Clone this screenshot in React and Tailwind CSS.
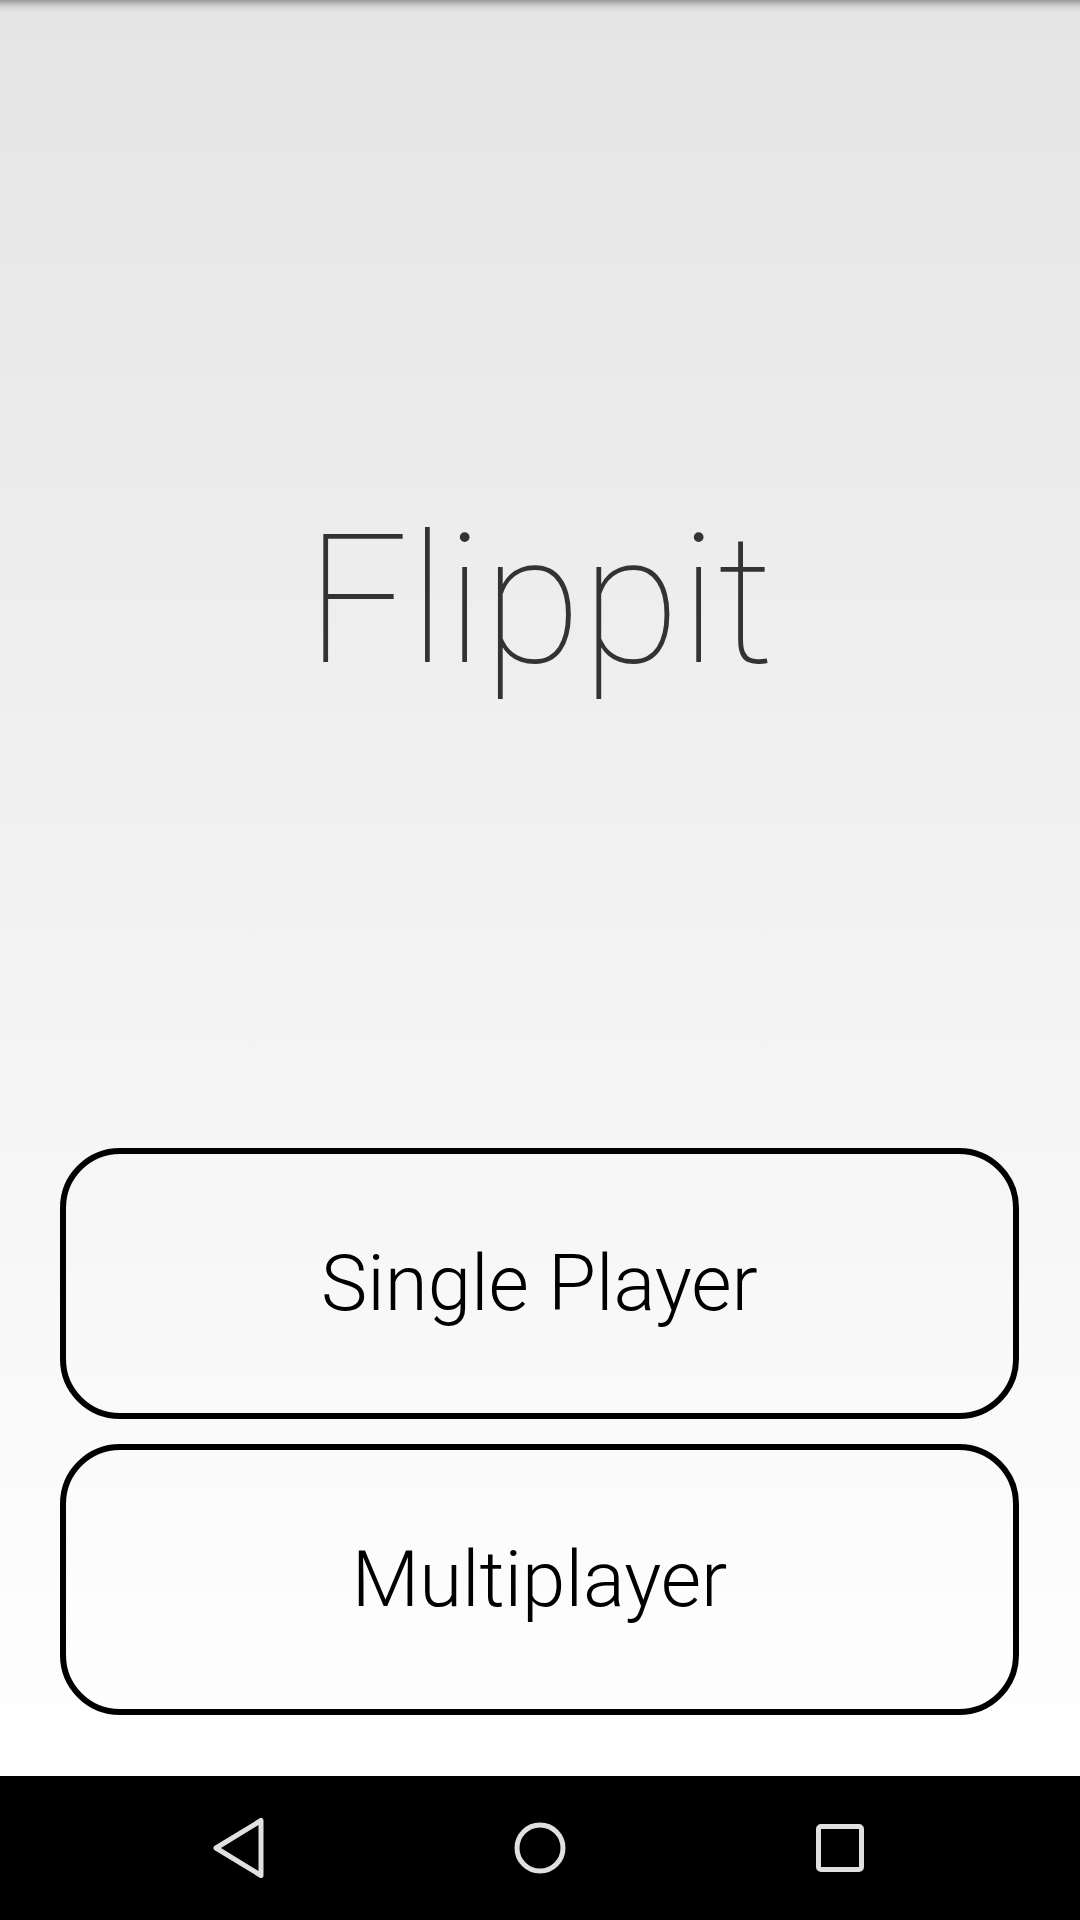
import React from "react";

const MenuButton = ({ label }) => (
  <button className="flex h-[271px] w-full items-center justify-center rounded-[60px] border-[6px] border-black bg-transparent text-[78px] font-light leading-none text-black">
    {label}
  </button>
);

const NavBar = () => (
  <div className="flex h-[144px] items-center justify-center bg-black">
    <div className="flex w-[300px] justify-center">
      <svg width="56" height="64" viewBox="0 0 56 64" fill="none">
        <path
          d="M49 4.5 L49 59.5 L4 32 Z"
          stroke="#e0e0e0"
          strokeWidth="5"
          strokeLinejoin="round"
        />
      </svg>
    </div>
    <div className="flex w-[300px] justify-center">
      <svg width="56" height="56" viewBox="0 0 56 56" fill="none">
        <circle cx="28" cy="28" r="23" stroke="#e0e0e0" strokeWidth="5" />
      </svg>
    </div>
    <div className="flex w-[300px] justify-center">
      <svg width="52" height="52" viewBox="0 0 52 52" fill="none">
        <rect
          x="4.5"
          y="4.5"
          width="43"
          height="43"
          rx="2.5"
          stroke="#e0e0e0"
          strokeWidth="5"
        />
      </svg>
    </div>
  </div>
);

const App = () => {
  return (
    <div
      className="relative flex h-[1920px] w-[1080px] flex-col overflow-hidden"
      style={{ fontFamily: "Roboto, 'Liberation Sans', sans-serif" }}
    >
      <div className="relative flex flex-1 flex-col bg-gradient-to-b from-[#e5e5e5] to-[#ffffff]">
        <div className="pointer-events-none absolute inset-x-0 top-0 h-[12px] bg-gradient-to-b from-[#9a9a9a] via-[#cfcfcf] to-transparent" />

        <div className="flex flex-1 items-center justify-center pt-[54px]">
          <h1 className="text-[180px] font-thin leading-none text-[#333333]">
            Flippit
          </h1>
        </div>

        <div className="flex flex-col gap-[25px] pb-[61px] pl-[60px] pr-[61px]">
          <MenuButton label="Single Player" />
          <MenuButton label="Multiplayer" />
        </div>
      </div>

      <NavBar />
    </div>
  );
};

export default App;
